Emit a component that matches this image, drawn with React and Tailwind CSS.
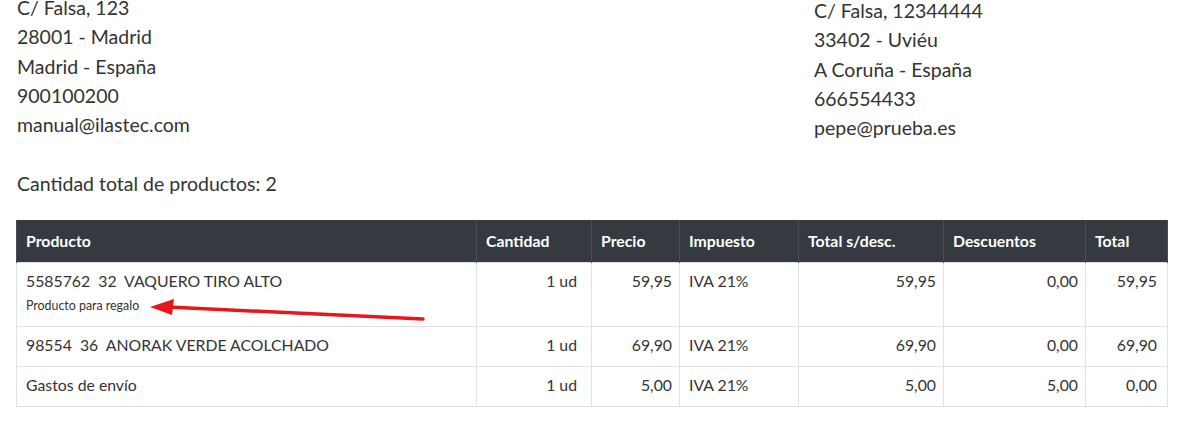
const rows = [
  {
    producto: "5585762  32  VAQUERO TIRO ALTO",
    nota: "Producto para regalo",
    cantidad: "1 ud",
    precio: "59,95",
    impuesto: "IVA 21%",
    totalSinDesc: "59,95",
    descuentos: "0,00",
    total: "59,95",
  },
  {
    producto: "98554  36  ANORAK VERDE ACOLCHADO",
    cantidad: "1 ud",
    precio: "69,90",
    impuesto: "IVA 21%",
    totalSinDesc: "69,90",
    descuentos: "0,00",
    total: "69,90",
  },
  {
    producto: "Gastos de envío",
    cantidad: "1 ud",
    precio: "5,00",
    impuesto: "IVA 21%",
    totalSinDesc: "5,00",
    descuentos: "5,00",
    total: "0,00",
  },
];

export default function App() {
  const th = "text-left font-bold text-white pl-[9px] border-x border-[#454d55]";
  const td = "border border-[#dee2e6] align-top pt-[7px] leading-[22px]";
  return (
    <div
      className="w-[1181px] h-[433px] overflow-hidden bg-white text-[#333]"
      style={{ fontFamily: "Lato, 'Open Sans', sans-serif" }}
    >
      {/* addresses */}
      <div className="flex -mt-[7px] text-[19.5px] leading-[29.25px]">
        <div className="w-[814px] pl-[17px]">
          <div>C/ Falsa, 123</div>
          <div>28001 - Madrid</div>
          <div>Madrid - España</div>
          <div>900100200</div>
          <div>manual@ilastec.com</div>
        </div>
        <div className="mt-[3px]">
          <div>C/ Falsa, 12344444</div>
          <div>33402 - Uviéu</div>
          <div>A Coruña - España</div>
          <div>666554433</div>
          <div>pepe@prueba.es</div>
        </div>
      </div>

      <div className="pl-[17px] mt-[29px] text-[19.5px] leading-[26px]">
        Cantidad total de productos: 2
      </div>

      {/* products table */}
      <div className="relative ml-[16px] mt-[23px] w-[1151px]">
        <table className="w-[1151px] table-fixed border-collapse text-[15.8px]">
          <colgroup>
            <col className="w-[460px]" />
            <col className="w-[115px]" />
            <col className="w-[88px]" />
            <col className="w-[119px]" />
            <col className="w-[145px]" />
            <col className="w-[142px]" />
            <col className="w-[82px]" />
          </colgroup>
          <thead className="bg-[#343a40]">
            <tr className="h-[42px]">
              <th className={th}>Producto</th>
              <th className={th}>Cantidad</th>
              <th className={th}>Precio</th>
              <th className={th}>Impuesto</th>
              <th className={th}>Total s/desc.</th>
              <th className={th}>Descuentos</th>
              <th className={th}>Total</th>
            </tr>
          </thead>
          <tbody>
            {rows.map((row, i) => (
              <tr key={i} className={row.nota ? "h-[64px]" : "h-[40px]"}>
                <td className={`${td} pl-[9px]`}>
                  <div className="whitespace-pre">{row.producto}</div>
                  {row.nota && (
                    <div className="text-[12.4px] leading-[18px] mt-[5px]">{row.nota}</div>
                  )}
                </td>
                <td className={`${td} text-right pr-[14px]`}>{row.cantidad}</td>
                <td className={`${td} text-right pr-[7px]`}>{row.precio}</td>
                <td className={`${td} pl-[9px]`}>{row.impuesto}</td>
                <td className={`${td} text-right pr-[7px]`}>{row.totalSinDesc}</td>
                <td className={`${td} text-right pr-[7px]`}>{row.descuentos}</td>
                <td className={`${td} text-right pr-[10px]`}>{row.total}</td>
              </tr>
            ))}
          </tbody>
        </table>

        {/* red annotation arrow */}
        <svg
          className="absolute left-0 top-0 pointer-events-none"
          width="1151"
          height="200"
          viewBox="0 0 1151 200"
        >
          <line
            x1="407"
            y1="99"
            x2="152"
            y2="87"
            stroke="#e8161b"
            strokeWidth="3.5"
            strokeLinecap="round"
          />
          <polygon points="134,87 158,79 156,95" fill="#e8161b" />
        </svg>
      </div>
    </div>
  );
}
